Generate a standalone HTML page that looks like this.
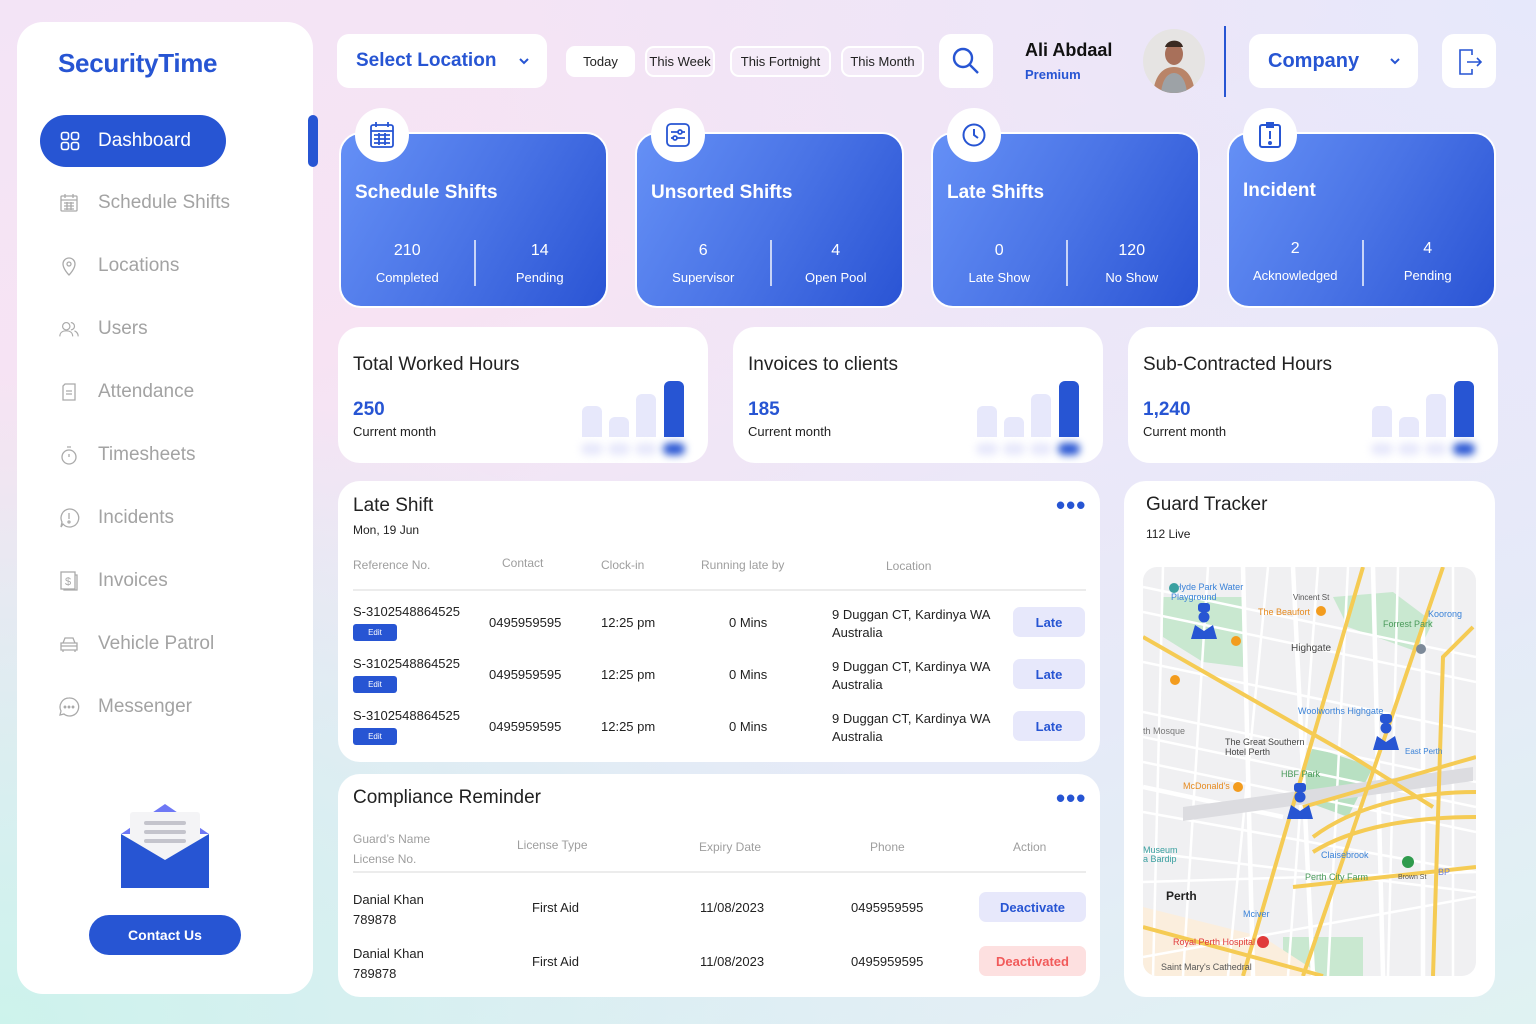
<!DOCTYPE html>
<html><head><meta charset="utf-8">
<style>
*{margin:0;padding:0;box-sizing:border-box}
body{width:1536px;height:1024px;overflow:hidden;font-family:"Liberation Sans",sans-serif;position:relative;
background:linear-gradient(160deg,#f3e4f6 0%,#f7e3f3 30%,#ece8f8 55%,#e6eaf8 70%,#dff2f2 100%);}
.bg2{position:absolute;inset:0;background:radial-gradient(ellipse at 0% 100%,#cdf3ec 0%,rgba(205,243,236,0) 45%),radial-gradient(ellipse at 100% 0%,#e6e8fb 0%,rgba(230,232,251,0) 50%);}
.a{position:absolute}
.w{background:#fff;border-radius:22px}
.side{left:17px;top:22px;width:296px;height:972px;border-radius:26px;background:#fff}
.logo{left:58px;top:48px;font-size:26px;font-weight:700;color:#2755d3;letter-spacing:-0.3px}
.nav{left:58px;font-size:19px;color:#a3a3a3;display:flex;align-items:center;gap:18px}
.nav svg{width:22px;height:22px}
.active{left:40px;top:115px;width:186px;height:52px;border-radius:26px;background:#2755d3;color:#fff;font-size:19px;display:flex;align-items:center;padding-left:20px;gap:18px}
.scroll{left:308px;top:115px;width:10px;height:52px;border-radius:5px;background:#2755d3}
.btn{background:#fff;border-radius:12px}
.pill{top:46px;height:31px;border-radius:9px;border:2px solid #fff;font-size:13px;color:#222;display:flex;align-items:center;justify-content:center;background:rgba(255,255,255,.25)}
.sc{top:132px;width:269px;height:176px;border-radius:22px;border:2px solid #fff;background:linear-gradient(120deg,#6590f6 0%,#4a74e6 50%,#2a54d4 100%);color:#fff}
.sc h3{position:absolute;left:14px;top:48px;font-size:19px;font-weight:700}
.sc .ic{position:absolute;left:14px;top:-26px;width:54px;height:54px;border-radius:50%;background:#fff;display:flex;align-items:center;justify-content:center}
.sc .v{position:absolute;top:108px;width:50%;text-align:center;font-size:16px}
.sc .l{position:absolute;top:136px;width:50%;text-align:center;font-size:13px}
.sc .dv{position:absolute;left:50%;top:106px;width:2px;height:46px;background:rgba(255,255,255,.7)}
.mc{top:327px;width:370px;height:136px;overflow:hidden}
.mc h4{position:absolute;left:15px;top:27px;font-size:19px;font-weight:400;color:#222}
.mc .n{position:absolute;left:15px;top:72px;font-size:19px;font-weight:700;color:#2755d3}
.mc .cm{position:absolute;left:15px;top:97px;font-size:13px;color:#222}
.bar{position:absolute;bottom:26px;width:20px;border-radius:6px 6px 0 0;background:#e7e8fb}
.sh{position:absolute;bottom:8px;width:22px;height:12px;border-radius:6px;background:#e7e8fb;filter:blur(4px)}
.th{position:absolute;font-size:12px;color:#9e9e9e}
.td{position:absolute;font-size:13px;color:#222}
.edit{position:absolute;width:44px;height:17px;border-radius:3px;background:#2755d3;color:#fff;font-size:8px;display:flex;align-items:center;justify-content:center}
.late{position:absolute;left:1013px;width:72px;height:30px;border-radius:7px;background:#e7e8fb;color:#2755d3;font-size:13px;font-weight:700;display:flex;align-items:center;justify-content:center}
.dots{position:absolute;font-size:26px;color:#2755d3;letter-spacing:1px;font-weight:700;line-height:10px}
</style></head><body>
<div class="bg2"></div>

<div class="a side"></div>
<div class="a logo">SecurityTime</div>
<div class="a active"><svg width="20" height="20" viewBox="0 0 20 20" fill="none" stroke="#fff" stroke-width="1.6"><rect x="1.5" y="1.5" width="7" height="7" rx="2"/><rect x="11.5" y="1.5" width="7" height="7" rx="2"/><rect x="1.5" y="11.5" width="7" height="7" rx="2"/><rect x="11.5" y="11.5" width="7" height="7" rx="2"/></svg>Dashboard</div>
<div class="a scroll"></div>
<div class="a nav" style="top:192px"><svg viewBox="0 0 22 22" fill="none" stroke="#aaa" stroke-width="1.3"><rect x="3" y="4" width="16" height="15" rx="1"/><path d="M3 8h16M7 2v4M15 2v4M6 11h10M6 14h10M6 17h10M9 10v8M13 10v8"/></svg>Schedule Shifts</div>
<div class="a nav" style="top:255px"><svg viewBox="0 0 22 22" fill="none" stroke="#aaa" stroke-width="1.3"><path d="M11 20s-6-6-6-11a6 6 0 0 1 12 0c0 5-6 11-6 11z"/><circle cx="11" cy="9" r="2"/></svg>Locations</div>
<div class="a nav" style="top:318px"><svg viewBox="0 0 24 22" fill="none" stroke="#aaa" stroke-width="1.3"><circle cx="9" cy="8" r="4"/><path d="M2 19c0-4 3-6 7-6s7 2 7 6"/><path d="M14 4a4 4 0 0 1 0 8M18 13c2 1 4 3 4 6"/></svg> Users</div>
<div class="a nav" style="top:381px"><svg viewBox="0 0 22 22" fill="none" stroke="#aaa" stroke-width="1.3"><path d="M7 3h10v16H5V5z"/><path d="M8 10h6M8 13h6"/></svg>Attendance</div>
<div class="a nav" style="top:444px"><svg viewBox="0 0 22 22" fill="none" stroke="#aaa" stroke-width="1.3"><circle cx="11" cy="13" r="7"/><path d="M9 3h4M11 13v-3"/></svg>Timesheets</div>
<div class="a nav" style="top:507px"><svg viewBox="0 0 22 22" fill="none" stroke="#aaa" stroke-width="1.3"><path d="M11 2a9 9 0 1 1-6 15l-2 3 1-5A9 9 0 0 1 11 2z"/><path d="M11 6v6"/><circle cx="11" cy="15" r="1"/></svg>Incidents</div>
<div class="a nav" style="top:570px"><svg viewBox="0 0 22 22" fill="none" stroke="#aaa" stroke-width="1.3"><rect x="3" y="2" width="14" height="17"/><path d="M6 19v1h13V5h-2"/><text x="7" y="15" font-size="11" fill="#aaa" stroke="none">$</text></svg>Invoices</div>
<div class="a nav" style="top:633px"><svg viewBox="0 0 22 22" fill="none" stroke="#aaa" stroke-width="1.3"><path d="M5 10l2-5h8l2 5M3 10h16v7H3zM3 13h16M5 17v2M17 17v2"/></svg>Vehicle Patrol</div>
<div class="a nav" style="top:696px"><svg viewBox="0 0 22 22" fill="none" stroke="#aaa" stroke-width="1.3"><path d="M11 2a9 9 0 1 1-5 16l-4 1 1-4A9 9 0 0 1 11 2z"/><circle cx="7" cy="11" r=".8" fill="#aaa"/><circle cx="11" cy="11" r=".8" fill="#aaa"/><circle cx="15" cy="11" r=".8" fill="#aaa"/></svg>Messenger</div>
<svg class="a" style="left:120px;top:804px" width="90" height="86" viewBox="0 0 90 86"><path d="M1 30L45 0 89 30z" fill="#6e78f5"/><rect x="10" y="8" width="70" height="50" rx="3" fill="#f4f4f6"/><rect x="24" y="17" width="42" height="4" rx="2" fill="#c4c4cc"/><rect x="24" y="26" width="42" height="4" rx="2" fill="#c4c4cc"/><rect x="24" y="35" width="42" height="4" rx="2" fill="#c4c4cc"/><path d="M1 30L45 56 89 30V84H1z" fill="#2755d3"/></svg>
<div class="a" style="left:89px;top:915px;width:152px;height:40px;border-radius:20px;background:#2755d3;color:#fff;font-weight:700;font-size:14px;display:flex;align-items:center;justify-content:center">Contact Us</div>

<div class="a btn" style="left:337px;top:34px;width:210px;height:54px;display:flex;align-items:center;padding-left:19px;color:#2755d3;font-size:19px;font-weight:700">Select Location<svg style="margin-left:22px" width="12" height="8" viewBox="0 0 12 8"><path d="M2 2l4 4 4-4" stroke="#2755d3" stroke-width="2" fill="none"/></svg></div>
<div class="a pill" style="left:566px;width:69px;background:#fff">Today</div>
<div class="a pill" style="left:645px;width:70px">This Week</div>
<div class="a pill" style="left:730px;width:101px">This Fortnight</div>
<div class="a pill" style="left:841px;width:83px">This Month</div>
<div class="a btn" style="left:939px;top:34px;width:54px;height:54px;display:flex;align-items:center;justify-content:center"><svg width="30" height="30" viewBox="0 0 30 30" fill="none" stroke="#2755d3" stroke-width="2.4"><circle cx="12" cy="12" r="9"/><path d="M19 19l8 8"/></svg></div>
<div class="a" style="left:1025px;top:40px;font-size:18px;font-weight:700;color:#111">Ali Abdaal</div>
<div class="a" style="left:1025px;top:67px;font-size:13px;font-weight:700;color:#2755d3">Premium</div>
<div class="a" style="left:1143px;top:29px;width:62px;height:64px;border-radius:50%;overflow:hidden;background:#e6e4e3">
<svg width="62" height="64" viewBox="0 0 62 64"><path d="M10 64c2-18 10-26 21-26s19 8 21 26z" fill="#b98468"/><path d="M18 64c1-12 6-20 13-20s12 8 13 20z" fill="#9da2a6"/><ellipse cx="31" cy="25" rx="9" ry="11" fill="#a8705a"/><path d="M22 18c2-8 16-9 18 0z" fill="#3a2a22"/></svg></div>
<div class="a" style="left:1224px;top:26px;width:2px;height:71px;background:#2755d3"></div>
<div class="a btn" style="left:1249px;top:34px;width:169px;height:54px;display:flex;align-items:center;padding-left:19px;color:#2755d3;font-size:20px;font-weight:700">Company<svg style="margin-left:30px" width="12" height="8" viewBox="0 0 12 8"><path d="M2 2l4 4 4-4" stroke="#2755d3" stroke-width="2" fill="none"/></svg></div>
<div class="a btn" style="left:1442px;top:34px;width:54px;height:54px;display:flex;align-items:center;justify-content:center"><svg width="30" height="30" viewBox="0 0 30 30" fill="none" stroke="#2755d3" stroke-width="1.6"><path d="M18 9V4H6v24h12v-5"/><path d="M13 16h14M23 12l4 4-4 4"/></svg></div>

<div class="a sc" style="left:339px"><div class="ic"><svg width="26" height="28" viewBox="0 0 26 28" fill="none" stroke="#2755d3" stroke-width="1.8"><rect x="2" y="4" width="22" height="22" rx="2"/><path d="M2 10h22M7 1v5M19 1v5M5 14h16M5 18h16M5 22h16M10 12v12M16 12v12"/></svg></div><h3>Schedule Shifts</h3><div class="v" style="left:0">210</div><div class="v" style="left:50%">14</div><div class="l" style="left:0">Completed</div><div class="l" style="left:50%">Pending</div><div class="dv"></div></div>
<div class="a sc" style="left:635px"><div class="ic"><svg width="26" height="26" viewBox="0 0 26 26" fill="none" stroke="#2755d3" stroke-width="1.8"><rect x="2" y="2" width="22" height="22" rx="4"/><path d="M6 10h14M6 16h14"/><circle cx="15" cy="10" r="2" fill="#fff"/><circle cx="10" cy="16" r="2" fill="#fff"/></svg></div><h3>Unsorted Shifts</h3><div class="v" style="left:0">6</div><div class="v" style="left:50%">4</div><div class="l" style="left:0">Supervisor</div><div class="l" style="left:50%">Open Pool</div><div class="dv"></div></div>
<div class="a sc" style="left:931px"><div class="ic"><svg width="26" height="26" viewBox="0 0 26 26" fill="none" stroke="#2755d3" stroke-width="2"><circle cx="13" cy="13" r="10.5"/><path d="M13 7v6l4 3"/></svg></div><h3>Late Shifts</h3><div class="v" style="left:0">0</div><div class="v" style="left:50%">120</div><div class="l" style="left:0">Late Show</div><div class="l" style="left:50%">No Show</div><div class="dv"></div></div>
<div class="a sc" style="left:1227px"><div class="ic"><svg width="26" height="28" viewBox="0 0 26 28" fill="none" stroke="#2755d3" stroke-width="2"><rect x="3" y="4" width="20" height="22" rx="2"/><path d="M10 2h6v4h-6zM13 10v8"/><circle cx="13" cy="22" r="1" fill="#2755d3"/></svg></div><h3 style="top:46px">Incident</h3><div class="v" style="left:0;top:106px">2</div><div class="v" style="left:50%;top:106px">4</div><div class="l" style="left:0;top:134px">Acknowledged</div><div class="l" style="left:50%;top:134px">Pending</div><div class="dv"></div></div>

<div class="a w mc" style="left:338px"><h4>Total Worked Hours</h4><div class="n">250</div><div class="cm">Current month</div>
<div class="bar" style="left:244px;height:31px"></div><div class="bar" style="left:271px;height:20px"></div><div class="bar" style="left:298px;height:43px"></div><div class="bar" style="left:326px;height:56px;background:#2755d3"></div>
<div class="sh" style="left:243px"></div><div class="sh" style="left:270px"></div><div class="sh" style="left:297px"></div><div class="sh" style="left:325px;background:#2755d3"></div></div>
<div class="a w mc" style="left:733px"><h4>Invoices to clients</h4><div class="n">185</div><div class="cm">Current month</div>
<div class="bar" style="left:244px;height:31px"></div><div class="bar" style="left:271px;height:20px"></div><div class="bar" style="left:298px;height:43px"></div><div class="bar" style="left:326px;height:56px;background:#2755d3"></div>
<div class="sh" style="left:243px"></div><div class="sh" style="left:270px"></div><div class="sh" style="left:297px"></div><div class="sh" style="left:325px;background:#2755d3"></div></div>
<div class="a w mc" style="left:1128px"><h4>Sub-Contracted Hours</h4><div class="n">1,240</div><div class="cm">Current month</div>
<div class="bar" style="left:244px;height:31px"></div><div class="bar" style="left:271px;height:20px"></div><div class="bar" style="left:298px;height:43px"></div><div class="bar" style="left:326px;height:56px;background:#2755d3"></div>
<div class="sh" style="left:243px"></div><div class="sh" style="left:270px"></div><div class="sh" style="left:297px"></div><div class="sh" style="left:325px;background:#2755d3"></div></div>

<div class="a w" style="left:338px;top:481px;width:762px;height:281px"></div>
<div class="a" style="left:353px;top:495px;font-size:19px;color:#222">Late Shift</div>
<div class="a" style="left:353px;top:523px;font-size:12px;color:#222">Mon, 19 Jun</div>
<div class="dots" style="left:1056px;top:500px">•••</div>
<div class="th" style="left:353px;top:558px">Reference No.</div><div class="th" style="left:502px;top:556px">Contact</div><div class="th" style="left:601px;top:558px">Clock-in</div><div class="th" style="left:701px;top:558px">Running late by</div><div class="th" style="left:886px;top:559px">Location</div>
<div class="a" style="left:353px;top:589px;width:733px;height:2px;background:#ececec"></div>
<div class="td" style="left:353px;top:604px">S-3102548864525</div><div class="edit" style="left:353px;top:624px">Edit</div><div class="td" style="left:489px;top:615px">0495959595</div><div class="td" style="left:601px;top:615px">12:25 pm</div><div class="td" style="left:729px;top:615px">0 Mins</div><div class="td" style="left:832px;top:606px;line-height:18px">9 Duggan CT, Kardinya WA<br>Australia</div><div class="late" style="top:607px">Late</div>
<div class="td" style="left:353px;top:656px">S-3102548864525</div><div class="edit" style="left:353px;top:676px">Edit</div><div class="td" style="left:489px;top:667px">0495959595</div><div class="td" style="left:601px;top:667px">12:25 pm</div><div class="td" style="left:729px;top:667px">0 Mins</div><div class="td" style="left:832px;top:658px;line-height:18px">9 Duggan CT, Kardinya WA<br>Australia</div><div class="late" style="top:659px">Late</div>
<div class="td" style="left:353px;top:708px">S-3102548864525</div><div class="edit" style="left:353px;top:728px">Edit</div><div class="td" style="left:489px;top:719px">0495959595</div><div class="td" style="left:601px;top:719px">12:25 pm</div><div class="td" style="left:729px;top:719px">0 Mins</div><div class="td" style="left:832px;top:710px;line-height:18px">9 Duggan CT, Kardinya WA<br>Australia</div><div class="late" style="top:711px">Late</div>

<div class="a w" style="left:338px;top:774px;width:762px;height:223px"></div>
<div class="a" style="left:353px;top:787px;font-size:19px;color:#222">Compliance Reminder</div>
<div class="dots" style="left:1056px;top:793px">•••</div>
<div class="th" style="left:353px;top:829px;line-height:20px">Guard’s Name<br>License No.</div><div class="th" style="left:517px;top:838px">License Type</div><div class="th" style="left:699px;top:840px">Expiry Date</div><div class="th" style="left:870px;top:840px">Phone</div><div class="th" style="left:1013px;top:840px">Action</div>
<div class="a" style="left:353px;top:871px;width:733px;height:2px;background:#ececec"></div>
<div class="td" style="left:353px;top:890px;line-height:20px">Danial Khan<br>789878</div><div class="td" style="left:532px;top:900px">First Aid</div><div class="td" style="left:700px;top:900px">11/08/2023</div><div class="td" style="left:851px;top:900px">0495959595</div>
<div class="a" style="left:979px;top:892px;width:107px;height:30px;border-radius:7px;background:#e7e8fb;color:#2755d3;font-size:13px;font-weight:700;display:flex;align-items:center;justify-content:center">Deactivate</div>
<div class="td" style="left:353px;top:944px;line-height:20px">Danial Khan<br>789878</div><div class="td" style="left:532px;top:954px">First Aid</div><div class="td" style="left:700px;top:954px">11/08/2023</div><div class="td" style="left:851px;top:954px">0495959595</div>
<div class="a" style="left:979px;top:946px;width:107px;height:30px;border-radius:7px;background:#fde0e0;color:#f15a5a;font-size:13px;font-weight:700;display:flex;align-items:center;justify-content:center">Deactivated</div>

<div class="a w" style="left:1124px;top:481px;width:371px;height:516px"></div>
<div class="a" style="left:1146px;top:494px;font-size:19px;color:#222">Guard Tracker</div>
<div class="a" style="left:1146px;top:527px;font-size:12px;color:#222">112 Live</div>
<div class="a" style="left:1143px;top:567px;width:333px;height:409px;border-radius:14px;overflow:hidden;background:#f0f0f2">
<svg width="333" height="409" viewBox="0 0 333 409" font-family="Liberation Sans" font-size="8">
<path d="M20 30h80v70l-40 -5-40-25z" fill="#c9e8d0"/><path d="M190 30l60 -5 40 30-15 30-70 -25z" fill="#c9e8d0"/>
<path d="M170 180l60 20-25 50-55-20z" fill="#b8e0c2"/><path d="M140 370h80v40h-80z" fill="#c9e8d0"/><path d="M0 340l120 30 60 39H0z" fill="#fbeedd"/>
<g stroke="#fff" stroke-width="2.5" fill="none">
<path d="M0 20l333 70M0 45l333 70M0 95l333 70M0 145l333 70M0 170l333 70M0 195l333 70M0 245l333 60M0 285l333 40M0 315l333 -10M0 390l333 -60"/>
<path d="M20 0l-10 409M65 0l-25 409M125 0l-40 409M175 0l-30 409M205 0l-20 409M255 0l-10 409M310 0v409"/>
</g>
<path d="M0 220l140 30M100 0l10 409M230 0l10 409M280 60v349M150 0l20 409" stroke="#fff" stroke-width="4.5" fill="none"/>
<path d="M40 240l290 -40v14l-290 40z" fill="#dcdce0"/>
<g stroke="#f5cb54" stroke-width="4" fill="none">
<path d="M0 70l210 120 80 50M220 0L100 409M300 0l-140 409M330 60l-30 30-10 319M160 240l173-50M150 320l183-20M0 360l180 49M170 270c40-30 100-45 163-45M170 285c40-25 100-35 163-35"/></g>
<text x="32" y="23" fill="#3a82d8" font-size="9">Hyde Park Water</text><text x="28" y="33" fill="#3a82d8" font-size="9">Playground</text>
<text x="150" y="33" fill="#555">Vincent St</text><text x="115" y="48" fill="#e68a1e" font-size="9">The Beaufort</text>
<text x="148" y="84" fill="#444" font-size="10">Highgate</text><text x="240" y="60" fill="#4a9a5a" font-size="9">Forrest Park</text>
<text x="155" y="147" fill="#3a82d8" font-size="9">Woolworths Highgate</text><text x="82" y="178" fill="#444" font-size="9">The Great Southern</text><text x="82" y="188" fill="#444" font-size="9">Hotel Perth</text>
<text x="138" y="210" fill="#4a9a5a" font-size="9">HBF Park</text><text x="40" y="222" fill="#e68a1e" font-size="9">McDonald's</text>
<text x="262" y="187" fill="#3a82d8" font-size="8">East Perth</text><text x="178" y="291" fill="#3a82d8" font-size="9">Claisebrook</text>
<text x="162" y="313" fill="#4a9a5a" font-size="9">Perth City Farm</text><text x="23" y="333" fill="#222" font-size="12" font-weight="700">Perth</text>
<text x="30" y="378" fill="#e03a3a" font-size="9">Royal Perth Hospital</text><text x="18" y="403" fill="#555" font-size="9">Saint Mary's Cathedral</text>
<text x="0" y="286" fill="#3aa0a0" font-size="9">Museum</text><text x="0" y="295" fill="#3aa0a0" font-size="9">a Bardip</text><text x="0" y="167" fill="#777" font-size="9">th Mosque</text>
<text x="265" y="60" fill="#3a82d8" font-size="9" transform="translate(20,-10)">Koorong</text><text x="100" y="350" fill="#3a82d8" font-size="9">Mciver</text>
<circle cx="265" cy="295" r="6" fill="#2f9b4d"/><text x="255" y="312" fill="#555" font-size="7">Brown St</text><text x="295" y="308" fill="#6b7bd8" font-size="9">BP</text>
<circle cx="31" cy="21" r="5" fill="#3aa0a0"/><circle cx="178" cy="44" r="5" fill="#f39c1e"/><circle cx="93" cy="74" r="5" fill="#f39c1e"/><circle cx="32" cy="113" r="5" fill="#f39c1e"/><circle cx="95" cy="220" r="5" fill="#f39c1e"/><circle cx="120" cy="375" r="6" fill="#e03a3a"/><circle cx="278" cy="82" r="5" fill="#7d8a99"/>
<g fill="#2755d3"><g transform="translate(50,36)"><rect x="5" y="0" width="12" height="9" rx="3"/><circle cx="11" cy="14" r="5.5"/><path d="M-2 36l4-14 9 6 9-6 4 14z"/></g>
<g transform="translate(232,147)"><rect x="5" y="0" width="12" height="9" rx="3"/><circle cx="11" cy="14" r="5.5"/><path d="M-2 36l4-14 9 6 9-6 4 14z"/></g>
<g transform="translate(146,216)"><rect x="5" y="0" width="12" height="9" rx="3"/><circle cx="11" cy="14" r="5.5"/><path d="M-2 36l4-14 9 6 9-6 4 14z"/></g></g>
</svg></div>
</body></html>
